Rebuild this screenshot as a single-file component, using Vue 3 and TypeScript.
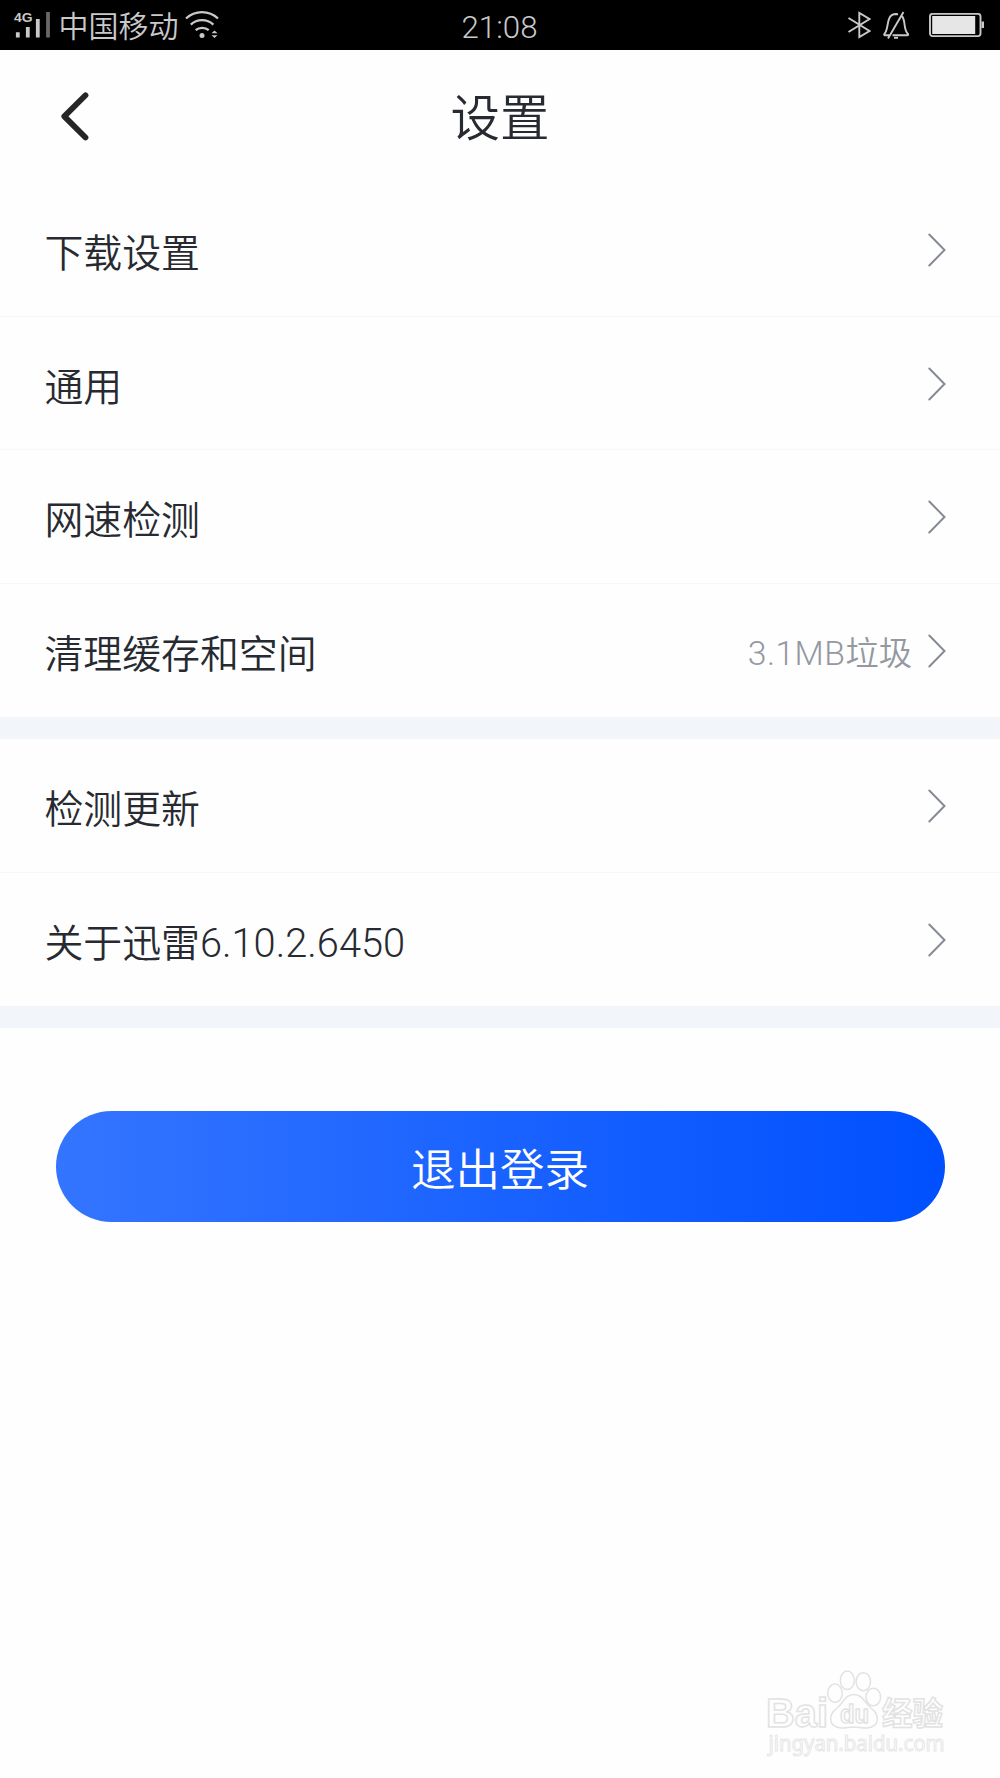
<script setup lang="ts">
interface SettingItem {
  label: string
  version?: string
  amount?: string
  unit?: string
}

const groups: SettingItem[][] = [
  [
    { label: '下载设置' },
    { label: '通用' },
    { label: '网速检测' },
    { label: '清理缓存和空间', amount: '3.1MB', unit: '垃圾' },
  ],
  [{ label: '检测更新' }, { label: '关于迅雷', version: '6.10.2.6450' }],
]
</script>

<template>
  <div class="screen">
    <header class="status">
      <div class="side">
        <svg class="signal" width="40" height="50" viewBox="0 0 40 50">
          <text x="0" y="22" class="net" textLength="18.5" lengthAdjust="spacingAndGlyphs">4G</text>
          <path d="M3.8 32.3v5.2M13.8 27v10.5M23.8 19v18.5" />
          <path class="dim" d="M34 12v25.5" />
        </svg>
        <span class="carrier">中国移动</span>
        <svg class="wifi" width="36" height="50" viewBox="0 0 36 50">
          <path d="M2 18.5C11 10 25 10 34 18.5M6.8 24.6C13 18.6 23 18.6 29.4 24.6M11.7 30.2C15 27 21.4 27 24.7 30.2" />
          <circle cx="18" cy="35.5" r="2.5" />
          <path class="fill" d="M27.5 33.2l3-2.8 3 2.8zM27.5 35.3l3 2.8 3-2.8z" />
        </svg>
      </div>
      <time class="clock">21:08</time>
      <div class="side right">
        <svg width="24" height="50" viewBox="0 0 24 50">
          <path d="M1.5 18L22.5 31L12.3 37V13L22.5 19L1.5 32" />
        </svg>
        <svg class="bell" width="28" height="50" viewBox="0 0 28 50">
          <path d="M7.5 35.3H3.2C2 35.3 1.8 34.4 2.6 33.6C7.5 28.5 3.3 14 14 14L16 14.2M19.7 15.8C24 20 21 29 25.8 33.6C26.5 34.4 26.2 35.3 25.2 35.3H10.5M6 38.5L21.5 12" />
          <path d="M12 37.8h4" />
        </svg>
        <svg class="battery" width="57" height="50" viewBox="0 0 57 50">
          <rect x="1" y="13.9" width="50.5" height="22.2" rx="2.5" />
          <rect class="charge" x="3.2" y="16" width="43" height="18" />
          <path class="tip" d="M52.5 21.5H55V28H52.5z" />
        </svg>
      </div>
    </header>

    <nav class="titlebar">
      <svg class="back" width="30" height="60" viewBox="0 0 30 60">
        <path d="M25.5 8.3L4.3 29.4L25.5 50.5" />
      </svg>
      <h1>设置</h1>
    </nav>

    <section v-for="(group, g) in groups" :key="g" class="group">
      <div v-for="item in group" :key="item.label" class="row">
        <span class="label">{{ item.label }}<span v-if="item.version" class="version">{{ item.version }}</span></span>
        <span v-if="item.amount" class="value"><span class="amount">{{ item.amount }}</span>{{ item.unit }}</span>
        <svg class="chevron" width="20" height="36" viewBox="0 0 20 36">
          <path d="M2.3 2.5L17.5 18L2.3 33.5" />
        </svg>
      </div>
    </section>

    <button class="logout" type="button">退出登录</button>

    <svg class="watermark" width="190" height="100" viewBox="0 0 190 100">
      <g class="outline">
        <text x="2" y="66.5" class="brand" textLength="62" lengthAdjust="spacingAndGlyphs">Bai</text>
        <ellipse cx="71" cy="33.3" rx="7.3" ry="9.2" />
        <ellipse cx="83.3" cy="20.3" rx="7" ry="9.3" />
        <ellipse cx="99.3" cy="21.7" rx="7.2" ry="9" />
        <ellipse cx="109.3" cy="37" rx="7.3" ry="8.8" />
        <path d="M90 34.5C99 34.5 101 43.5 107 48C117 56 115 67 103 68C98 68.4 95 67 90 67C85 67 82 68.4 77 68C65 67 63 56 73 48C79 43.5 81 34.5 90 34.5Z" />
        <text x="76" y="62.5" class="du" textLength="29" lengthAdjust="spacingAndGlyphs">du</text>
        <text x="118" y="64.5" class="cn" textLength="61" lengthAdjust="spacingAndGlyphs">经验</text>
      </g>
      <text x="4.5" y="90.5" class="url" textLength="176" lengthAdjust="spacingAndGlyphs">jingyan.baidu.com</text>
    </svg>
  </div>
</template>

<style>
body {
  margin: 0;
  background: #fefefe;
}
</style>

<style scoped>
.screen {
  position: relative;
  width: 1000px;
  height: 1778px;
  overflow: hidden;
  background: #fefefe;
  color: #272a30;
  font-family: "Noto Sans CJK SC", sans-serif;
}
svg {
  display: block;
  flex: none;
  fill: none;
}
.status {
  display: flex;
  align-items: center;
  box-sizing: border-box;
  height: 50px;
  padding: 0 14px 0 14px;
  background: #000;
  color: #c9c9c9;
}
.status svg {
  stroke: #c9c9c9;
  stroke-width: 1.9;
}
.side {
  display: flex;
  flex: 1;
  align-items: center;
}
.right {
  justify-content: flex-end;
}
.status .signal {
  stroke-width: 3.8;
}
.status .signal .dim {
  stroke: #686868;
}
.status .net {
  fill: #c9c9c9;
  stroke: none;
  font: bold 13.5px "Liberation Sans", sans-serif;
}
.carrier {
  margin-left: 4.5px;
  font-size: 30px;
  font-weight: 350;
  line-height: 48px;
  padding-bottom: 2px;
}
.status .wifi {
  margin-left: 5.5px;
  stroke-width: 2.3;
}
.status .wifi circle,
.status .wifi .fill {
  fill: #c9c9c9;
  stroke: none;
}
.clock {
  padding: 5px 1px 0 0;
  font: 300 31.3px/45px Roboto, sans-serif;
}
.bell {
  margin-left: 11.5px;
}
.battery {
  margin-left: 19px;
}
.battery .charge {
  fill: #e6e6e6;
  stroke: none;
}
.battery .tip {
  fill: #c9c9c9;
  stroke: none;
}
.titlebar {
  display: grid;
  grid-template-columns: 1fr auto 1fr;
  align-items: center;
  height: 133px;
}
.back {
  margin-left: 60px;
  stroke: #262628;
  stroke-width: 5.8;
  stroke-linecap: round;
  stroke-linejoin: round;
}
h1 {
  margin: 0;
  padding-bottom: 3px;
  font-size: 49.5px;
  font-weight: 350;
  line-height: 130px;
}
.group {
  border-bottom: 22px solid #f2f6fa;
}
.row {
  display: flex;
  align-items: center;
  box-sizing: border-box;
  height: 133.5px;
  padding: 2px 53px 0 44.4px;
}
.row:not(:last-child) {
  border-bottom: 1px solid #f6f7f8;
}
.label {
  flex: 1;
  font-size: 38.9px;
  font-weight: 350;
  line-height: 60px;
}
.version,
.amount {
  font-family: Roboto, sans-serif;
  font-weight: 300;
}
.version {
  font-size: 39.8px;
  line-height: 1;
}
.amount {
  font-size: 33.8px;
  letter-spacing: 0.4px;
  line-height: 1;
}
.value {
  color: #9498a0;
  font-size: 33.3px;
  font-weight: 350;
  line-height: 60px;
}
.chevron {
  margin-left: 15px;
  stroke: #858a94;
  stroke-width: 2;
  stroke-linecap: round;
}
.logout {
  display: block;
  width: 889px;
  height: 111px;
  margin: 83px auto 0;
  padding: 0;
  border: 0;
  border-radius: 56px;
  background: linear-gradient(90deg, #3475ff, #0050ff);
  color: #fff;
  font: 350 44.5px/111px "Noto Sans CJK SC", sans-serif;
}
.watermark {
  position: absolute;
  left: 764px;
  top: 1660px;
}
.outline {
  fill: #fefefe;
  stroke: #e2e2e2;
  stroke-width: 1.5;
}
.brand {
  font: bold 40px "Liberation Sans", sans-serif;
}
.du {
  font: bold 26px "Liberation Sans", sans-serif;
}
.cn {
  font: bold 32px "Noto Sans CJK SC", sans-serif;
}
.url {
  fill: #fefefe;
  stroke: #e6e6e6;
  stroke-width: 1;
  font: 21px "Noto Sans", sans-serif;
}
</style>
